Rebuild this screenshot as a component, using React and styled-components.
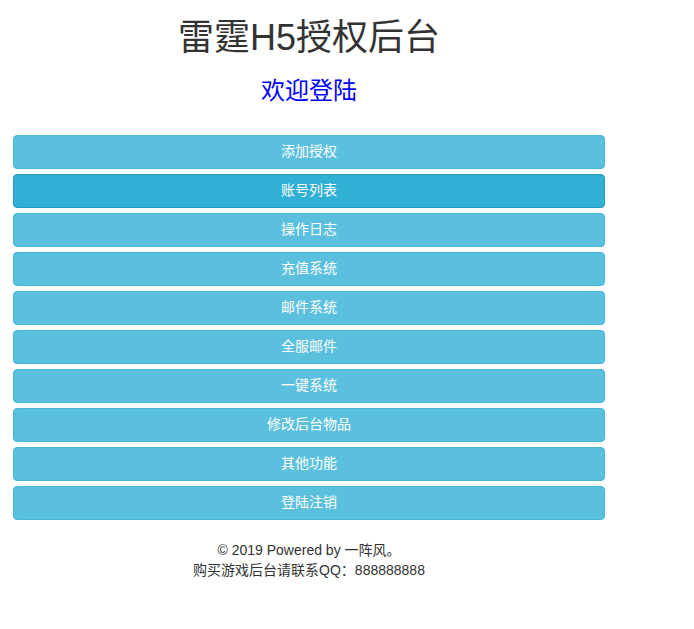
import styled, { createGlobalStyle } from "styled-components";

const GlobalStyle = createGlobalStyle`
  html, body {
    margin: 0;
    padding: 0;
    background: #fff;
  }
  body {
    font-family: "Liberation Sans", "Noto Sans CJK SC", sans-serif;
    font-size: 14px;
    line-height: 1.42857;
    color: #333;
  }
`;

const Page = styled.div`
  width: 592px;
  margin-left: 13px;
  padding-top: 18px;
  text-align: center;
`;

const Title = styled.h1`
  margin: 0 0 20px;
  font-size: 36px;
  font-weight: 400;
  line-height: 1.1;
  color: #333;
`;

const Welcome = styled.h3`
  margin: 0 0 31px;
  font-size: 24px;
  font-weight: 400;
  line-height: 1.1;
  color: #0000ff;
`;

const Menu = styled.div`
  display: flex;
  flex-direction: column;
  gap: 5px;
`;

const MenuButton = styled.button`
  display: block;
  width: 100%;
  height: 34px;
  padding: 6px 12px;
  font-family: inherit;
  font-size: 14px;
  line-height: 1.42857;
  color: #fff;
  background-color: ${(p) => (p.active ? "#31b0d5" : "#5bc0de")};
  border: 1px solid ${(p) => (p.active ? "#269abc" : "#46b8da")};
  border-radius: 4px;
  cursor: pointer;
  &:hover {
    background-color: #31b0d5;
    border-color: #269abc;
  }
`;

const Footer = styled.footer`
  margin-top: 20px;
  font-size: 14px;
  line-height: 20px;
  color: #333;
`;

const items = [
  "添加授权",
  "账号列表",
  "操作日志",
  "充值系统",
  "邮件系统",
  "全服邮件",
  "一键系统",
  "修改后台物品",
  "其他功能",
  "登陆注销",
];

export default function App() {
  return (
    <>
      <GlobalStyle />
      <Page>
        <Title>雷霆H5授权后台</Title>
        <Welcome>欢迎登陆</Welcome>
        <Menu>
          {items.map((label, i) => (
            <MenuButton key={label} active={i === 1}>
              {label}
            </MenuButton>
          ))}
        </Menu>
        <Footer>
          <div>© 2019 Powered by 一阵风。</div>
          <div>购买游戏后台请联系QQ：888888888</div>
        </Footer>
      </Page>
    </>
  );
}
